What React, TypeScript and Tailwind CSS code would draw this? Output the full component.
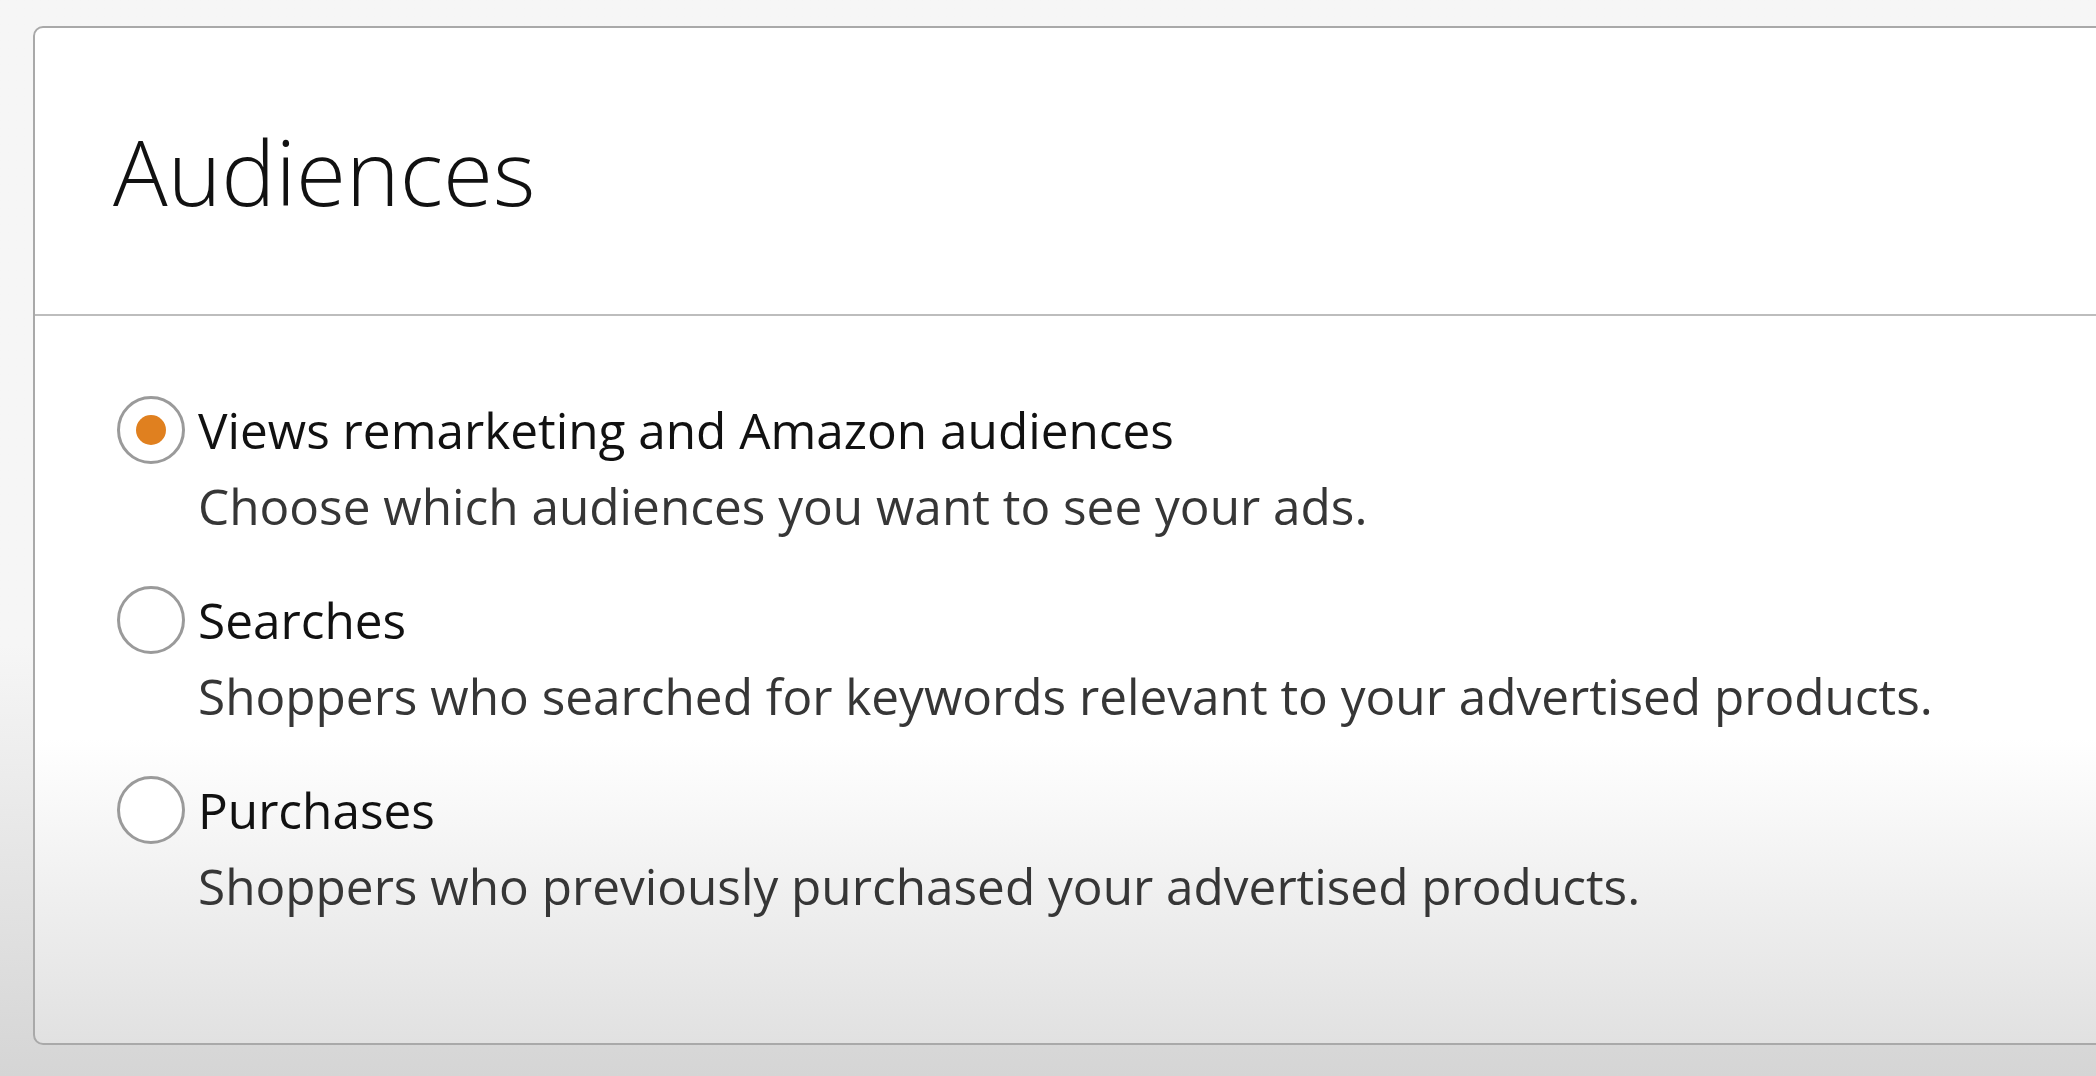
import React from "react";

type Option = {
  id: string;
  label: string;
  description: string;
};

const options: Option[] = [
  {
    id: "views",
    label: "Views remarketing and Amazon audiences",
    description: "Choose which audiences you want to see your ads.",
  },
  {
    id: "searches",
    label: "Searches",
    description: "Shoppers who searched for keywords relevant to your advertised products.",
  },
  {
    id: "purchases",
    label: "Purchases",
    description: "Shoppers who previously purchased your advertised products.",
  },
];

function Radio({ checked }: { checked: boolean }) {
  return (
    <span className="flex h-[68px] w-[68px] shrink-0 items-center justify-center rounded-full border-[3px] border-[#9a9a9a] bg-white">
      {checked && <span className="h-[30px] w-[30px] rounded-full bg-[#e0801f]"></span>}
    </span>
  );
}

export default function App() {
  const [selected, setSelected] = React.useState("views");

  return (
    <div
      className="h-[1076px] w-full overflow-hidden bg-linear-to-b from-[#f6f6f6] from-60% to-[#d5d5d5] pt-[26px] pl-[33px]"
      style={{ fontFamily: '"Open Sans", "Liberation Sans", sans-serif' }}
    >
      {/* Audiences card */}
      <div className="flex h-[1019px] w-[2200px] flex-col rounded-l-[10px] border-2 border-[#a9a9a9] bg-linear-to-b from-white from-70% to-[#e1e1e1]">
        <div className="flex h-[288px] items-center border-b-2 border-[#bdbdbd] pl-[78px]">
          <h1 className="text-[91px] font-[350] leading-none text-[#111]">Audiences</h1>
        </div>

        <div className="flex flex-col gap-[46px] pt-[80px] pl-[82px]">
          {options.map((opt) => (
            <label key={opt.id} className="flex cursor-pointer items-start gap-[13px]" onClick={() => setSelected(opt.id)}>
              <Radio checked={selected === opt.id} />
              <div className="flex flex-col">
                <span className="text-[49.5px] leading-[68px] text-[#111]">{opt.label}</span>
                <span className="mt-[8px] text-[49.5px] leading-[68px] text-[#363636]">{opt.description}</span>
              </div>
            </label>
          ))}
        </div>
      </div>
    </div>
  );
}
